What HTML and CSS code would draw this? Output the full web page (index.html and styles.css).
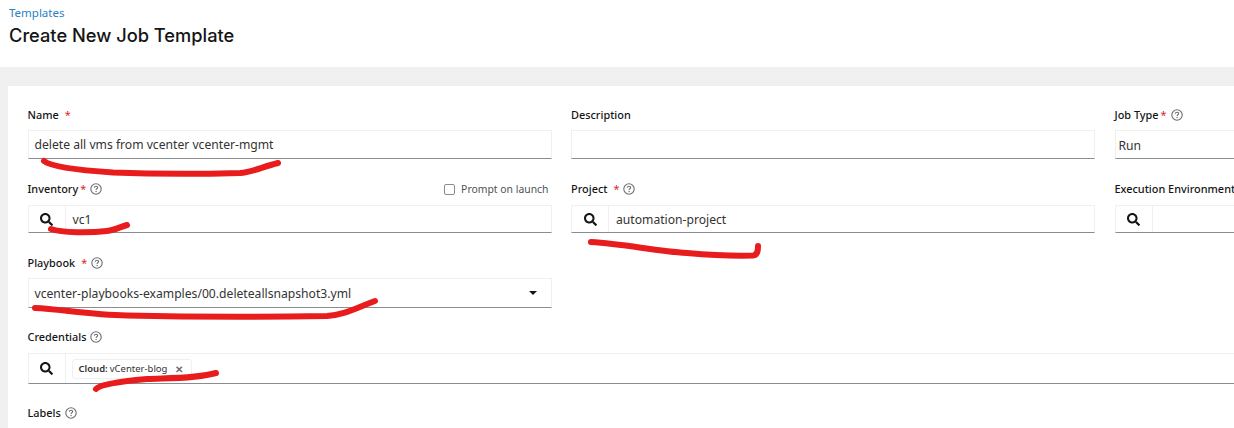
FILE: index.html
```html
<!DOCTYPE html>
<html lang="en">
<head>
<meta charset="utf-8">
<title>Create New Job Template</title>
<link rel="stylesheet" href="styles.css">
</head>
<body>
<svg width="0" height="0" class="defs">
  <symbol id="help" viewBox="0 0 12 12"><circle cx="6" cy="6" r="5.200" fill="none" stroke="#6a6e73" stroke-width="1.100"/><path d="M4.300 4.700C4.400 3.700 5.100 3.200 6 3.200c1 0 1.700.6 1.700 1.400 0 1.200-1.600 1.200-1.600 2.300" fill="none" stroke="#6a6e73" stroke-width="1.100"/><rect x="5.500" y="7.900" width="1.200" height="1.200" fill="#6a6e73"/></symbol>
  <symbol id="search" viewBox="0 0 512 512"><path fill="#151515" d="M505 442.700L405.300 343c-4.500-4.500-10.600-7-17-7H372c27.600-35.300 44-79.700 44-128C416 93.100 322.900 0 208 0S0 93.100 0 208s93.100 208 208 208c48.300 0 92.700-16.400 128-44v16.300c0 6.400 2.500 12.500 7 17l99.700 99.700c9.400 9.400 24.600 9.400 33.900 0l28.300-28.300c9.400-9.400 9.400-24.600.1-34zM208 336c-70.700 0-128-57.200-128-128 0-70.700 57.200-128 128-128 70.700 0 128 57.200 128 128 0 70.700-57.200 128-128 128z"/></symbol>
</svg>
<header class="page-head">
  <a class="crumb" href="#">Templates</a>
  <h1>Create New Job Template</h1>
</header>
<main class="band">
  <form class="card">
    <div class="grid">
      <div class="field">
        <div class="label tight"><b>Name</b><i class="req wide">*</i></div>
        <div class="input tall"><span class="value">delete all vms from vcenter vcenter-mgmt</span></div>
      </div>
      <div class="field">
        <div class="label tight"><b>Description</b></div>
        <div class="input tall"></div>
      </div>
      <div class="field">
        <div class="label tight"><b>Job Type</b><i class="req">*</i><svg class="help"><use href="#help"/></svg></div>
        <div class="input tall"><span class="value run">Run</span></div>
      </div>

      <div class="field">
        <div class="label split">
          <span class="label-main"><b>Inventory</b><i class="req">*</i><svg class="help"><use href="#help"/></svg></span>
          <span class="prompt"><span class="check"></span>Prompt on launch</span>
        </div>
        <div class="input lookup"><span class="search"><svg><use href="#search"/></svg></span><span class="value">vc1</span></div>
      </div>
      <div class="field">
        <div class="label"><b>Project</b><i class="req wide">*</i><svg class="help"><use href="#help"/></svg></div>
        <div class="input lookup"><span class="search"><svg><use href="#search"/></svg></span><span class="value">automation-project</span></div>
      </div>
      <div class="field">
        <div class="label"><b>Execution Environment</b></div>
        <div class="input lookup"><span class="search"><svg><use href="#search"/></svg></span></div>
      </div>

      <div class="field">
        <div class="label tight"><b>Playbook</b><i class="req wide">*</i><svg class="help"><use href="#help"/></svg></div>
        <div class="input select"><span class="value plain">vcenter-playbooks-examples/00.deleteallsnapshot3.yml</span><span class="caret"></span></div>
      </div>
    </div>

    <div class="field full">
      <div class="label"><b>Credentials</b><svg class="help"><use href="#help"/></svg></div>
      <div class="input lookup creds"><span class="search"><svg><use href="#search"/></svg></span>
        <span class="chips"><span class="chip"><b>Cloud:</b> vCenter-blog<span class="x">✕</span></span></span>
      </div>
    </div>
    <div class="field full">
      <div class="label"><b>Labels</b><svg class="help"><use href="#help"/></svg></div>
    </div>
  </form>
</main>
<svg class="ink" width="1234" height="428" viewBox="0 0 1234 428">
  <path d="M44 161C50 166 75 170 113 172.500C150 174 205 174 240 173C252 172 262 167 278 163"/>
  <path d="M51 229C62 233 90 233 107 231C115 230 120 227 127 225"/>
  <path d="M591 242C625 244 655 251 687 253C710 255 735 256 753 255.500C758 255 758 250 758 246"/>
  <path d="M35 308C60 309 90 315 127 315.500C190 317 270 317 327 316C345 315 358 307 375 301"/>
  <path d="M96 389C100 384 125 381 147 379C165 378 195 379 216 373"/>
</svg>
</body>
</html>
```
FILE: styles.css
```css
* { box-sizing: border-box; }
html, body { margin: 0; padding: 0; }
body {
  width: 1234px;
  height: 428px;
  overflow: hidden;
  position: relative;
  background: #fff;
  color: #151515;
  font-family: "Noto Sans", "Open Sans", sans-serif;
}
.defs { position: absolute; }
.page-head {
  height: 67px;
  padding: 6px 0 0 9px;
}
.crumb {
  display: block;
  font-size: 11.500px;
  line-height: 14px;
  color: #2a7fc9;
  text-decoration: none;
}
h1 {
  margin: 3px 0 0;
  font-family: "Inter", "Noto Sans", sans-serif;
  font-size: 18.250px;
  line-height: 24px;
  font-weight: 500;
  color: #151515;
  white-space: nowrap;
}
.band {
  height: 361px;
  padding: 19px 0 0 8px;
  background: #f0f0f0;
  overflow: hidden;
}
.card {
  width: 1300px;
  height: 400px;
  padding: 20px 0 0 19.500px;
  background: #fff;
}
.grid {
  display: grid;
  grid-template-columns: 524px 524px 524px;
  column-gap: 19.500px;
  row-gap: 21px;
  align-items: start;
}
.field.full { margin-top: 20px; width: 1400px; }
.field.full + .field.full { margin-top: 20px; }
.label {
  display: flex;
  align-items: center;
  height: 18px;
  margin-bottom: 7px;
  font-size: 10.900px;
  line-height: 18px;
  white-space: nowrap;
}
.label.tight { margin-bottom: 6px; }
.label b { font-weight: 500; }
.label.split { justify-content: space-between; }
.label-main { display: flex; align-items: center; }
.req {
  margin-left: 2px;
  font-style: normal;
  color: #dc1f1f;
}
.req.wide { margin-left: 6px; }
.help {
  width: 12px;
  height: 12px;
  margin-left: 4px;
}
.prompt {
  display: flex;
  align-items: center;
  margin-right: 3px;
  font-size: 10.400px;
  color: #4f5255;
}
.check {
  width: 11px;
  height: 11px;
  margin-right: 6px;
  border: 1px solid #8a8d90;
  border-radius: 2px;
  background: #fff;
}
.input {
  display: flex;
  align-items: center;
  height: 28px;
  border: 1px solid #f0f0f0;
  border-bottom: 1px solid #8a8d90;
  font-size: 12.150px;
  white-space: nowrap;
  background: #fff;
}
.input.tall { height: 29px; }
.input.select { height: 30px; justify-content: space-between; }
.input.creds { height: 31px; }
.value {
  padding-left: 6px;
  color: #333;
}
.value.plain { padding-left: 6px; }
.value.run { padding: 2px 0 0 3px; }
.lookup .value { padding-left: 7px; }
.search {
  display: flex;
  align-items: center;
  justify-content: center;
  flex: none;
  width: 37px;
  height: 100%;
  border-right: 1px solid #f0f0f0;
}
.search svg { width: 13px; height: 13px; }
.caret {
  width: 0;
  height: 0;
  margin-right: 14px;
  border-left: 4.500px solid transparent;
  border-right: 4.500px solid transparent;
  border-top: 4.500px solid #151515;
}
.chips { padding-left: 6px; }
.chip {
  display: inline-flex;
  align-items: center;
  height: 20px;
  padding: 0 8px 0 6px;
  border: 1px solid #f0f0f0;
  border-radius: 3px;
  font-size: 9.500px;
  color: #333;
}
.chip b { font-weight: 600; margin-right: 2px; }
.x {
  margin-left: 8px;
  font-size: 10px;
  font-weight: 700;
  color: #6a6e73;
}
.ink {
  position: absolute;
  left: 0;
  top: 0;
  pointer-events: none;
}
.ink path {
  fill: none;
  stroke: #e81c1c;
  stroke-width: 6px;
  stroke-linecap: round;
  stroke-linejoin: round;
}
```
